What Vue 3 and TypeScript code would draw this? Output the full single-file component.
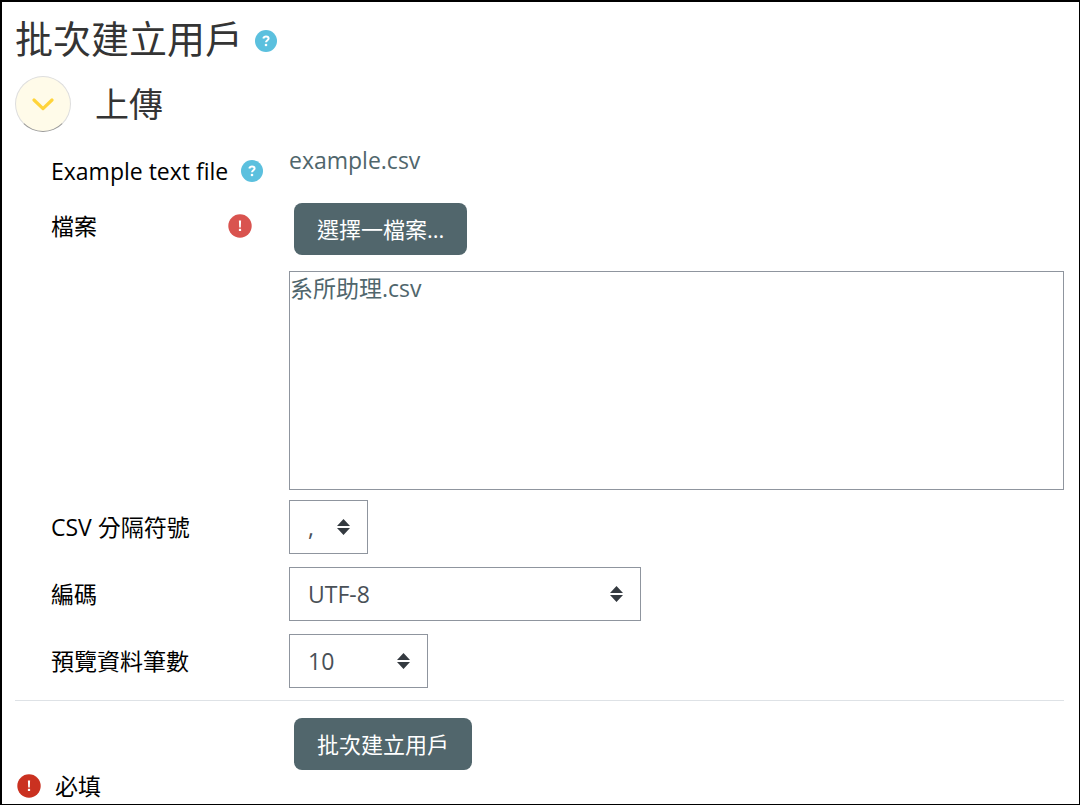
<script setup lang="ts">
import { ref } from 'vue'

interface SelectField {
  id: string
  label: string
  size: string
  options: string[]
}

const fields: SelectField[] = [
  { id: 'delimiter', label: 'CSV 分隔符號', size: 'small', options: [',', ';', ':'] },
  { id: 'encoding', label: '編碼', size: 'large', options: ['UTF-8', 'BIG-5'] },
  { id: 'preview', label: '預覽資料筆數', size: 'medium', options: ['10', '20', '100'] },
]

const values = ref<Record<string, string>>({ delimiter: ',', encoding: 'UTF-8', preview: '10' })
const open = ref(true)
</script>

<template>
  <main class="page">
    <header class="title">
      <h1>批次建立用戶</h1>
      <button class="help" type="button" aria-label="Help">
        <svg viewBox="0 0 22 22" width="22" height="22">
          <circle cx="11" cy="11" r="11" fill="#5bc0de" />
          <path d="M8.3 8.4C8.7 7 9.7 6.4 11 6.4C12.5 6.4 13.6 7.2 13.6 8.5C13.6 10.2 11 10.3 11 12.3" fill="none" stroke="#fff" stroke-width="2" />
          <circle cx="11" cy="15" r="1.3" fill="#fff" />
        </svg>
      </button>
    </header>

    <div class="section">
      <button class="toggle" type="button" aria-label="上傳" :aria-expanded="open" @click="open = !open">
        <svg viewBox="0 0 22 13" width="22" height="13">
          <path d="M2 2L11 10.6L20 2" fill="none" stroke="#ffd43b" stroke-width="3.2" stroke-linecap="round" stroke-linejoin="round" />
        </svg>
      </button>
      <h2>上傳</h2>
    </div>

    <form @submit.prevent>
      <div v-show="open" class="fields">
        <div class="row example">
          <div class="name">
            <span>Example text file</span>
            <button class="help" type="button" aria-label="Help">
              <svg viewBox="0 0 22 22" width="22" height="22">
                <circle cx="11" cy="11" r="11" fill="#5bc0de" />
                <path d="M8.3 8.4C8.7 7 9.7 6.4 11 6.4C12.5 6.4 13.6 7.2 13.6 8.5C13.6 10.2 11 10.3 11 12.3" fill="none" stroke="#fff" stroke-width="2" />
                <circle cx="11" cy="15" r="1.3" fill="#fff" />
              </svg>
            </button>
          </div>
          <a class="link" href="#example">example.csv</a>
        </div>

        <div class="row file">
          <div class="name required">
            <label for="choose">檔案</label>
            <svg viewBox="0 0 24 24" width="24" height="24">
              <circle cx="12" cy="12" r="11.7" fill="#d9534f" />
              <path d="M10.9 6.5H13.1L12.8 13.5H11.2Z" fill="#fff" />
              <rect x="10.9" y="14.8" width="2.2" height="2.2" fill="#fff" />
            </svg>
          </div>
          <div>
            <button id="choose" class="btn" type="button">選擇一檔案...</button>
            <div class="drop">
              <a class="link" href="#file">系所助理.csv</a>
            </div>
          </div>
        </div>

        <div v-for="field in fields" :key="field.id" class="row">
          <label class="name" :for="field.id">{{ field.label }}</label>
          <div class="select" :class="field.size">
            <select :id="field.id" v-model="values[field.id]">
              <option v-for="option in field.options" :key="option">{{ option }}</option>
            </select>
            <svg viewBox="0 0 13 16" width="13" height="16">
              <path d="M6.5 0L13 7H0ZM0 9H13L6.5 16Z" fill="#343a40" />
            </svg>
          </div>
        </div>
      </div>

      <div class="actions">
        <button class="btn" type="submit">批次建立用戶</button>
      </div>
    </form>

    <footer class="note">
      <svg viewBox="0 0 24 24" width="24" height="24">
        <circle cx="12" cy="12" r="11.7" fill="#ca3120" />
        <path d="M10.9 6.5H13.1L12.8 13.5H11.2Z" fill="#fff" />
        <rect x="10.9" y="14.8" width="2.2" height="2.2" fill="#fff" />
      </svg>
      <span>必填</span>
    </footer>
  </main>
</template>

<style>
body {
  margin: 0;
  background: #fff;
}
</style>

<style scoped>
.page {
  box-sizing: border-box;
  min-height: 100vh;
  padding: 12px 15px 0 13px;
  border: solid #000;
  border-width: 2px 1px 1px 2px;
  background: #fff;
  color: #000;
  font-family: "Open Sans", "Noto Sans CJK TC", sans-serif;
  font-size: 23px;
  line-height: 32px;
}

svg {
  display: block;
  flex: none;
}

button,
select {
  margin: 0;
  font-family: inherit;
}

h1,
h2 {
  margin: 0;
  color: #343434;
  font-weight: 400;
}

h1 {
  font-size: 38px;
  line-height: 48px;
}

h2 {
  font-size: 34px;
  line-height: 56px;
}

.title {
  display: flex;
  align-items: center;
  gap: 12px;
}

.help {
  padding: 0;
  border: 0;
  background: none;
}

.title .help {
  padding-top: 6px;
}

.section {
  display: flex;
  gap: 24px;
  margin: 14px 0 12px;
}

.toggle {
  display: flex;
  align-items: center;
  justify-content: center;
  box-sizing: border-box;
  width: 56px;
  height: 56px;
  padding: 0;
  border: 1px solid #dedede;
  border-bottom-color: #999;
  border-radius: 50%;
  background: #fffbe9;
}

.fields {
  display: grid;
  gap: 13px;
  padding-left: 36px;
}

.row {
  display: grid;
  grid-template-columns: 238px minmax(0, 1fr);
  align-items: center;
}

.name {
  display: flex;
  align-items: center;
  justify-content: space-between;
  padding-right: 26px;
}

.required {
  padding-right: 37px;
}

.link {
  justify-self: start;
  color: #50666c;
  text-decoration: none;
}

.example {
  align-items: start;
}

.example .name {
  padding-top: 11px;
}

.file {
  align-items: start;
  margin-bottom: -3px;
}

.file .name {
  padding-top: 10px;
}

.btn {
  height: 52px;
  margin-left: 5px;
  padding: 0 23px;
  border: 0;
  border-radius: 8px;
  background: #51666c;
  color: #fff;
  font-size: 22px;
  line-height: 52px;
}

.file .btn {
  display: block;
  margin-top: 3px;
}

.drop {
  box-sizing: border-box;
  min-height: 219px;
  margin-top: 16px;
  border: 1px solid #8f959e;
}

.drop .link {
  display: block;
}

.select {
  display: grid;
  align-items: center;
}

.select.small {
  width: 79px;
}

.select.medium {
  width: 139px;
}

.select.large {
  width: 352px;
}

.select select,
.select svg {
  grid-area: 1 / 1;
}

.select svg {
  justify-self: end;
  margin-right: 18px;
  pointer-events: none;
}

.select select {
  width: 100%;
  height: 54px;
  padding: 0 36px 0 18px;
  border: 1px solid #8f959e;
  border-radius: 0;
  appearance: none;
  background: #fff;
  color: #495057;
  font-size: 23px;
}

.actions {
  margin-top: 12px;
  padding: 17px 0 0 274px;
  border-top: 1px solid #dee2e6;
}

.actions .btn {
  display: block;
}

.note {
  display: flex;
  align-items: center;
  gap: 14px;
  padding-left: 2px;
}
</style>
